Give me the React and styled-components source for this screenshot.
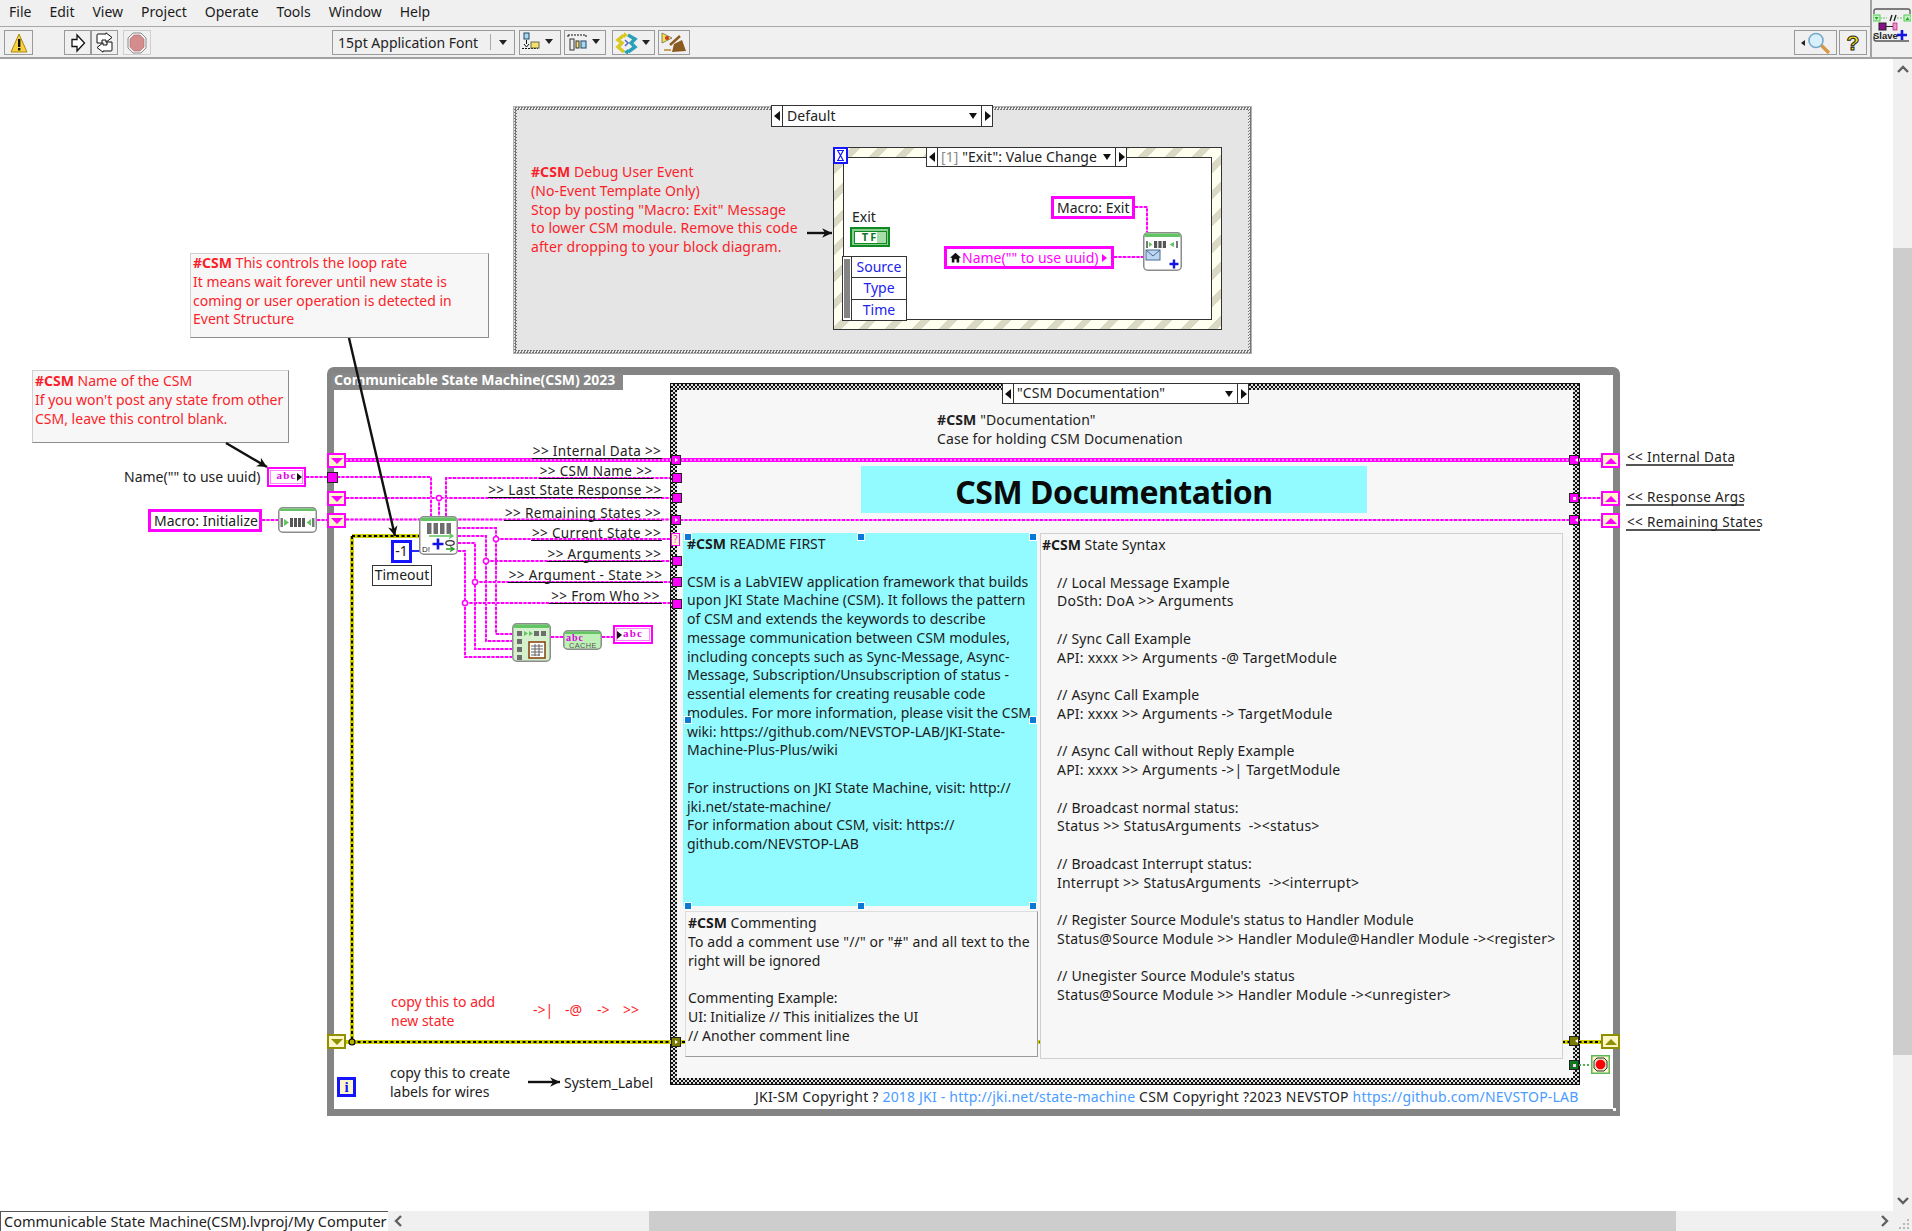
import React from "react";
import styled, { createGlobalStyle, css } from "styled-components";

const FONT = `"Noto Sans", "Open Sans", "Liberation Sans", sans-serif`;
const Y0 = 59;

const Global = createGlobalStyle`
  html, body { margin: 0; padding: 0; background: #fff; }
  #root { width: 1912px; height: 1231px; overflow: hidden; }
  * { box-sizing: border-box; }
`;

const place = css`
  position: absolute;
  left: ${(p) => p.$x}px;
  top: ${(p) => p.$y - Y0}px;
  ${(p) => (p.$w !== undefined ? `width: ${p.$w}px;` : "")}
  ${(p) => (p.$h !== undefined ? `height: ${p.$h}px;` : "")}
`;

const Page = styled.div`
  width: 1912px; height: 1231px; display: flex; flex-direction: column;
  font-family: ${FONT}; font-size: 14px; color: #222; background: #fff;
`;

/* ---------- header ---------- */
const Header = styled.header`
  display: flex; height: 59px; flex: none; background: #f0f0f0; border-bottom: 2px solid #a2a2a2;
`;
const HeaderMain = styled.div`flex: 1; display: flex; flex-direction: column;`;
const MenuBar = styled.nav`
  height: 27px; display: flex; align-items: center; padding: 0 0 3px 9px; gap: 18px;
  border-bottom: 1px solid #a8a8a8; font-size: 14px;
`;
const MenuItem = styled.span`color: #1c1c1c;`;
const Toolbar = styled.div`display: flex; align-items: center; height: 30px; padding: 1px 3px 0 4px;`;
const ToolBtn = styled.div`
  width: ${(p) => p.$w}px; height: 25px; margin-left: ${(p) => p.$ml || 0}px;
  display: flex; align-items: center; justify-content: center;
  border: 1.5px solid ${(p) => (p.$soft ? "#cfcfcf" : "#9a9a9a")}; background: #f0f0f0;
`;
const FontSelect = styled.div`
  width: 183px; height: 25px; margin-left: 181px; display: flex; align-items: center;
  border: 1.5px solid #9a9a9a; font-size: 14px; padding-left: 5px; padding-bottom: 1px; letter-spacing: 0;
`;
const FontName = styled.span`flex: 1; white-space: nowrap;`;
const FontCaret = styled.span`
  width: 24px; height: 16px; border-left: 1px solid #a8a8a8; display: flex; align-items: center; justify-content: center;
  &::after { content: ""; border: 4px solid transparent; border-top: 5px solid #222; margin-top: 5px; }
`;
const Spacer = styled.div`flex: 1;`;
const CornerIcon = styled.div`
  width: 42px; height: 57px; border-left: 2px solid #a2a2a2; padding: 8px 0 0 1px;
`;

/* ---------- middle ---------- */
const Middle = styled.main`flex: 1; display: flex; min-height: 0;`;
const Canvas = styled.div`flex: 1; position: relative; overflow: hidden; background: #fff;`;
const VScroll = styled.div`width: 19px; display: flex; flex-direction: column; background: #f0f0f0;`;
const ScrollBtn = styled.div`
  width: ${(p) => p.$w || 19}px; height: ${(p) => p.$h || 20}px; flex: none;
  display: flex; align-items: center; justify-content: center; color: #606060;
`;
const VGap = styled.div`height: ${(p) => p.$h}px; flex: none;`;
const VThumb = styled.div`height: 807px; flex: none; background: #cdcdcd;`;

/* ---------- bottom ---------- */
const Bottom = styled.footer`height: 20px; flex: none; display: flex; background: #f0f0f0;`;
const StatusPath = styled.div`
  width: 388px; height: 20px; background: #fff; border: 1px solid #555; border-bottom: 0; border-right: 0;
  font-size: 14.5px; line-height: 19px; padding-left: 3px; white-space: nowrap; overflow: hidden;
`;
const HGap = styled.div`width: ${(p) => p.$w}px; flex: none;`;
const HThumb = styled.div`width: 1027px; flex: none; background: #cdcdcd;`;
const HRest = styled.div`flex: 1;`;

/* ---------- structures on the diagram canvas ---------- */
const DisabledFrame = styled.div`
  ${place}; padding: 3px; border: 1px solid #b0b0b0;
  background: conic-gradient(#777 25%, #e8e8e8 0 50%, #777 0 75%, #e8e8e8 0) 0 0 / 3px 3px;
`;
const DisabledFill = styled.div`width: 100%; height: 100%; background: #e5e5e5;`;
const EventFrame = styled.div`
  ${place}; padding: 9px; border: 1.5px solid #333;
  background: repeating-linear-gradient(135deg, #fffff0 0 12px, #d9d9c4 12px 19px);
`;
const EventFill = styled.div`width: 100%; height: 100%; background: #fff; border: 1.5px solid #333;`;
const Selector = styled.div`
  ${place}; display: flex; align-items: stretch; background: #fff; border: 1.5px solid #333;
  font-size: 14px; color: #222; z-index: 3;
`;
const SelArrow = styled.div`
  width: 11px; flex: none; display: flex; align-items: center; justify-content: center;
  border-${(p) => (p.$dir === "l" ? "right" : "left")}: 1.5px solid #333;
  &::after {
    content: ""; border: 5px solid transparent;
    ${(p) => (p.$dir === "l" ? "border-right: 6px solid #111; margin-left: -6px;" : "border-left: 6px solid #111; margin-right: -6px;")}
  }
`;
const SelText = styled.div`
  flex: 1; display: flex; align-items: center; padding: 0 0 2px ${(p) => p.$pad || 4}px; white-space: nowrap; position: relative;
  letter-spacing: 0.08px;
`;
const SelCaret = styled.span`
  position: absolute; right: 4px; top: 50%; margin-top: -3px; border: 4px solid transparent; border-top: 6px solid #111;
`;
const GreyIdx = styled.span`color: #8a8a8a;`;

const LoopFrame = styled.div`
  ${place}; border: 7px solid #848484; border-top-width: 8px; border-bottom-width: 7px;
  border-radius: 7px 7px 0 0; background: #fff;
`;
const LoopTitle = styled.div`
  ${place}; background: #888; color: #fff; font-weight: 700; font-size: 14px; line-height: 13px;
  padding-left: 3px; white-space: nowrap; letter-spacing: -0.05px; z-index: 1;
`;
const LoopNotch = styled.div`${place}; background: #fff;`;
const CaseFrame = styled.div`
  ${place}; padding: 6px; border: 1px solid #111;
  background: conic-gradient(#111 25%, #ddd 0 50%, #111 0 75%, #ddd 0) 0 0 / 4px 4px;
`;
const CaseFill = styled.div`width: 100%; height: 100%; background: #f7f7f7;`;

/* ---------- wires ---------- */
const WireSvg = styled.svg`position: absolute; left: 0; top: 0; width: 1893px; height: 1152px; pointer-events: none;`;
const WIRE_THIN = [
  "262,520 278,520", "317,520 327,520", "306,477 327,477", "337,477 431,477 431,516",
  "346,498 670,498", "439,498 439,516", "446,516 446,478 670,478", "346,519.5 670,519.5",
  "458,528 496,528 496,634 512,634", "458,536 486,536 486,641 512,641",
  "458,543 475,543 475,649 512,649", "458,551 465,551 465,657 512,657",
  "496,539 670,539", "486,561 670,561", "475,582 670,582", "465,603 670,603",
  "680,520 1569,520", "1579,498 1601,498", "1579,520 1601,520",
  "551,637 563,637", "602,637 613,637",
  "1135,207 1147,207 1147,232", "1114,257 1143,257",
];
const JUNCTIONS = [[439, 498], [496, 539], [486, 561], [475, 582], [465, 603]];
const ARROWS = [
  [349, 338, 395, 536], [226, 443, 267, 467], [807, 233, 832, 233], [528, 1082, 560, 1082],
];

function Wires() {
  return (
    <WireSvg viewBox={`0 ${Y0} 1893 1152`}>
      <g fill="none">
        {WIRE_THIN.map((p) => (
          <g key={p}>
            <polyline points={p} stroke="#ffa8ff" strokeWidth="2" />
            <polyline points={p} stroke="#ff00ff" strokeWidth="2" strokeDasharray="3 1.5" />
          </g>
        ))}
        <polyline points="346,460 1601,460" stroke="#ff00ff" strokeWidth="4" />
        <polyline points="346,460 1601,460" stroke="#fff" strokeWidth="1" strokeDasharray="2 2" />
        <polyline points="352,536 352,1042 1601,1042" stroke="#d0d000" strokeWidth="4" />
        <polyline points="352,536 420,536" stroke="#d0d000" strokeWidth="4" />
        <polyline points="346,1042 1601,1042" stroke="#d0d000" strokeWidth="4" />
        <polyline points="352,536 352,1042 1601,1042" stroke="#000" strokeWidth="2" strokeDasharray="3 2.5" />
        <polyline points="352,536 420,536" stroke="#000" strokeWidth="2" strokeDasharray="3 2.5" />
        <polyline points="412,551 420,551" stroke="#2a2aff" strokeWidth="2" />
        <polyline points="1579,1065 1592,1065" stroke="#4fb04f" strokeWidth="2" strokeDasharray="2 2" />
      </g>
      {JUNCTIONS.map(([x, y]) => (
        <circle key={x} cx={x} cy={y} r="2.6" fill="#fff" stroke="#ff00ff" strokeWidth="1.5" />
      ))}
      <circle cx="352" cy="1042" r="3" fill="#b3b300" stroke="#000" strokeWidth="1.2" />
    </WireSvg>
  );
}
const ArrowSvg = styled(WireSvg)`z-index: 6;`;
function Arrows() {
  return (
    <ArrowSvg viewBox={`0 ${Y0} 1893 1152`}>
      {ARROWS.map(([a, b, c, d]) => {
        const ang = Math.atan2(d - b, c - a);
        const pt = (r, t) => `${c + r * Math.cos(ang + t)},${d + r * Math.sin(ang + t)}`;
        return (
          <g key={a}>
            <line x1={a} y1={b} x2={c} y2={d} stroke="#111" strokeWidth="2.4" />
            <polygon points={`${c},${d} ${pt(11, Math.PI - 0.45)} ${pt(7, Math.PI)} ${pt(11, Math.PI + 0.45)}`} fill="#111" />
          </g>
        );
      })}
    </ArrowSvg>
  );
}

/* ---------- text on the diagram ---------- */
const Note = styled.div`
  ${place}; background: #f7f7f7; border: 1px solid #d0d0d0; border-right: 1.5px solid #8c8c8c; border-bottom: 1.5px solid #8c8c8c;
  padding: ${(p) => p.$pt || 0}px 2px 0; z-index: 2;
`;
const RedLines = styled.div`color: #fa1e2a; font-size: 14px; line-height: 18.75px; white-space: pre;`;
const Tag = styled.b`font-weight: 700;`;
const FreeText = styled.div`
  ${place}; white-space: pre; font-size: ${(p) => p.$size || 14}px; line-height: ${(p) => p.$lh || 19}px;
  color: ${(p) => p.$color || "#222"}; z-index: 2;
  letter-spacing: ${(p) => p.$ls || 0}px;
`;
const WireLabel = styled.div`
  ${place}; text-align: center; font-size: 13.5px; line-height: 12px; height: 13.5px; color: #222; white-space: pre;
  border-bottom: 1.5px solid #111; letter-spacing: 0.35px; z-index: 2;
`;
const SideLabel = styled.div`
  ${place}; font-size: 13.5px; line-height: 14px; height: 16px; color: #222; white-space: pre;
  border-bottom: 2px solid #555; letter-spacing: 0.35px; z-index: 2; padding-left: 1px;
`;
const Heading = styled.div`
  ${place}; background: #92fbff; display: flex; align-items: center; justify-content: center; padding-top: 3px;
  font-weight: 700; font-size: 32px; color: #0a0a0a; letter-spacing: -0.5px; z-index: 2;
`;
const DocPanel = styled.div`
  ${place}; background: ${(p) => p.$bg || "#f7f7f7"}; padding: 2px 0 0 ${(p) => p.$pl || 3}px; z-index: 2;
  ${(p) => p.$border && `border: 1px solid #d0d0d0;`}
  ${(p) => p.$shadow && `border-right: 1.5px solid #999; border-bottom: 1.5px solid #999; border-top: 1px solid #ddd; border-left: 1px solid #ddd;`}
`;
const TextLine = styled.div`
  height: 18.75px; line-height: 18.75px; font-size: 14px; white-space: pre; color: #1c1c1c;
  padding-left: ${(p) => p.$indent || 0}px;
  letter-spacing: ${(p) => p.$ls ?? 0}px;
`;
const Handle = styled.div`${place}; background: #0a78d7; border: 1px solid #fff; z-index: 4;`;
const Copyright = styled.div`
  ${place}; font-size: 14px; line-height: 19px; white-space: pre; color: #222; z-index: 2; letter-spacing: 0.2px;
`;
const CopyLink = styled.span`color: #4a9cff;`;

/* ---------- nodes ---------- */
const StringConst = styled.div`
  ${place}; background: #fff; border: 3px solid #ff00ff; font-size: 14px; line-height: 17px; display: flex; align-items: center;
  padding-left: ${(p) => p.$pad || 3}px; white-space: nowrap; color: ${(p) => p.$color || "#222"}; z-index: 3;
`;
const RightTri = styled.span`
  border: 4px solid transparent; border-left: 5px solid #ff00ff; margin-left: 3px; margin-right: -3px;
`;
const ShiftRegBox = styled.div`
  ${place}; width: 19px; height: 15px; background: #fdf6c8; border: 2.5px solid ${(p) => p.$c};
  display: flex; align-items: center; justify-content: center; z-index: 3;
  &::after {
    content: ""; border: 6px solid transparent;
    ${(p) => (p.$up ? `border-bottom: 6px solid ${p.$c}; border-top: 0;` : `border-top: 6px solid ${p.$c}; border-bottom: 0;`)}
    border-left-width: 6.5px; border-right-width: 6.5px;
  }
`;
const TunnelBox = styled.div`
  ${place}; width: ${(p) => p.$s || 10}px; height: ${(p) => p.$s || 10}px; background: ${(p) => p.$c || "#ff00ff"};
  border: 1px solid #222; z-index: 3; display: flex; align-items: center; justify-content: center;
  ${(p) => p.$mark === "l" && `&::after { content: ""; border: 2.5px solid transparent; border-left: 3px solid #fff; margin-right: -3px; }`}
  ${(p) => p.$mark === "r" && `&::after { content: ""; border: 2.5px solid transparent; border-right: 3px solid #fff; margin-left: 3px; }`}
  ${(p) => p.$mark === "c" && `&::after { content: ""; width: 3px; height: 3px; background: #ffd0ff; }`}
`;
const QueryTunnel = styled.div`
  ${place}; background: #fdf6c8; border: 1px solid #ff00ff; color: #ff30ff; font-size: 10px; line-height: 11px; text-align: center; z-index: 3;
`;
const AbcTerm = styled.div`
  ${place}; border: 2.5px solid #ff00ff; background: #fff; padding: 1px; z-index: 3; position: absolute;
  &::after {
    content: ""; position: absolute; top: 50%; margin-top: -4px; border: 4px solid transparent;
    ${(p) => (p.$left ? "left: 2px; border-left: 5px solid #111;" : "right: -2px; border-left: 5px solid #111;")}
  }
`;
const AbcInner = styled.div`
  width: 100%; height: 100%; border: 1.5px solid #ff80ff; background: #fff; color: #e000e0; font-family: "Liberation Serif", serif;
  font-weight: 700; font-size: 11px; line-height: 9px; letter-spacing: 1.2px; text-align: center;
`;
const NumConst = styled.div`
  ${place}; border: 3px solid #1414ff; background: #fff; text-align: center; font-size: 14px; line-height: 16px; color: #222; z-index: 3;
`;
const LabelBox = styled.div`
  ${place}; border: 1.5px solid #333; background: #fff; text-align: center; font-size: 14px; line-height: 17px; color: #222; z-index: 3;
`;
const IterBox = styled.div`
  ${place}; border: 3px solid #1414ff; background: #fdf6c8; color: #1414ff; font-family: "Liberation Serif", serif; font-weight: 700;
  font-size: 15px; line-height: 14px; text-align: center; z-index: 3;
`;
const TFBox = styled.div`
  ${place}; border: 2.5px solid #0e8a20; background: #8ccf92; padding: 1.5px; z-index: 3;
`;
const TFInner = styled.div`
  width: 100%; height: 100%; border: 1px solid #0e8a20; background: linear-gradient(90deg, #fff 72%, #a8dca8 72%);
  color: #0e7a1c; font-weight: 700; font-size: 11px; line-height: 10px; text-align: center; letter-spacing: 2px;
`;
const EventData = styled.div`
  ${place}; display: flex; background: #fff; border: 1.5px solid #333; z-index: 3;
`;
const EventBar = styled.div`width: 9px; background: #fff; border-right: 1.5px solid #333; padding: 2px 1px;
  &::after { content: ""; display: block; height: 100%; background: #848484; }
`;
const EventRows = styled.div`flex: 1; display: flex; flex-direction: column;`;
const EventRow = styled.div`
  flex: 1; color: #2222ee; font-size: 14px; text-align: center; line-height: 19px;
  & + & { border-top: 1.5px solid #333; }
`;
const NodeWrap = styled.div`${place}; z-index: 4; display: flex;`;
const InlineIcon = styled.svg`flex: none; margin: 0 1px 0 1px;`;

/* ---------- icons ---------- */
const G = "#62c462";
const Shell = ({ w = 39, h = 39, band = 4, fill = "#fff", children }) => (
  <svg width={w} height={h} viewBox={`0 0 ${w} ${h}`}>
    <rect x=".75" y=".75" width={w - 1.5} height={h - 1.5} rx="4" fill={fill} stroke="#8c8c8c" strokeWidth="1.5" />
    <path d={`M1.5 ${band + 1} V4 Q1.5 1.5 4 1.5 H${w - 4} Q${w - 1.5} 1.5 ${w - 1.5} 4 V${band + 1} Z`} fill={G} />
    {children}
  </svg>
);
const Bars = ({ x, y, n = 3, w = 4, h = 10, gap = 1.8, c = "#6e6e6e" }) => (
  <g fill={c}>{Array.from({ length: n }, (_, i) => <rect key={i} x={x + i * (w + gap)} y={y} width={w} height={h} />)}</g>
);
const BlueP = ({ x, y, s = 5, t = 2.2 }) => (
  <path d={`M${x - s} ${y} H${x + s} M${x} ${y - s} V${y + s}`} stroke="#1414e0" strokeWidth={t} />
);
const InitIcon = () => (
  <Shell h={26} band={3}>
    <rect x="2.5" y="11" width="2.5" height="9" fill="#777" />
    <polygon points="6,12 6,19 11,15.5" fill={G} />
    <Bars x={12} y={11} n={4} w={3} h={9} gap={1} c="#555" />
    <polygon points="33,12 33,19 28.5,15.5" fill={G} />
    <rect x="34" y="11" width="2.5" height="9" fill="#777" />
  </Shell>
);
const StateIcon = () => (
  <Shell>
    <Bars x={8} y={7} n={4} w={4.5} h={11} gap={2} />
    <path d="M10 20 H33 M30 17.5 L34 20 L30 22.5" stroke={G} strokeWidth="1.3" fill="none" />
    <BlueP x={19} y={28} s={5.5} t={2.6} />
    <text x="3" y="36" fontSize="8" fontFamily="Liberation Sans" fill="#222">D!</text>
    <ellipse cx="31" cy="27" rx="4.2" ry="2.4" fill="none" stroke="#333" strokeWidth="1.3" />
    <path d="M27 33 H34 M31 30.5 L35 33 L31 35.5" stroke="#2a9a2a" strokeWidth="1.4" fill="none" />
  </Shell>
);
const PostIcon = () => (
  <Shell>
    <rect x="3" y="9" width="2" height="7" fill="#777" />
    <polygon points="6,10 6,15 9.5,12.5" fill={G} />
    <Bars x={11} y={9} n={3} w={3.2} h={7} gap={1.2} c="#555" />
    <polygon points="31,10 31,15 26.5,12.5" fill={G} />
    <rect x="33" y="9" width="2" height="7" fill="#777" />
    <rect x="3" y="18" width="14" height="10" fill="#bcd6f4" stroke="#4a6a8a" />
    <path d="M3 18 L10 24 L17 18" fill="none" stroke="#4a6a8a" />
    <BlueP x={31} y={32} s={4.5} t={2.4} />
  </Shell>
);
const LogIcon = () => (
  <Shell fill="#d4f0cc">
    <g fill="#6e6e6e">
      <rect x="5" y="8" width="5" height="5" /><rect x="22" y="8" width="5" height="5" /><rect x="29" y="8" width="5" height="5" />
      <rect x="5" y="16" width="5" height="5" /><rect x="5" y="24" width="5" height="5" /><rect x="5" y="32" width="5" height="5" />
    </g>
    <polygon points="12,8 12,13 16,10.5" fill={G} /><polygon points="17,8 17,13 21,10.5" fill={G} />
    <rect x="17" y="19" width="16" height="16" fill="#fff" stroke="#8a4a14" strokeWidth="1.6" />
    <path d="M19 23 H31 M19 26 H31 M19 29 H31 M19 32 H28 M23 21 V33 M27 21 V33" stroke="#555" strokeWidth=".9" />
  </Shell>
);
const CacheIcon = () => (
  <Shell h={20} band={3} fill="#bff0b8">
    <text x="3" y="11" fontSize="10" fontWeight="700" fontFamily="Liberation Serif" fill="#e000e0" letterSpacing="1">abc</text>
    <text x="6" y="18" fontSize="7.4" fontFamily="Liberation Sans" fill="#555" letterSpacing=".4">CACHE</text>
  </Shell>
);
const StopIcon = () => (
  <svg width="19" height="19" viewBox="0 0 19 19">
    <rect x=".75" y=".75" width="17.5" height="17.5" fill="#fdf6c8" stroke="#5cb85c" strokeWidth="1.5" />
    <polygon points="6,3 13,3 16,6 16,13 13,16 6,16 3,13 3,6" fill="#e8e0c8" stroke="#333" />
    <circle cx="9.5" cy="9.5" r="4.8" fill="#ff0000" />
  </svg>
);
const HourGlass = () => (
  <svg width="15" height="17" viewBox="0 0 15 17">
    <rect x="1" y="1" width="13" height="15" fill="#fff" stroke="#1414ff" strokeWidth="2" />
    <path d="M4 3.5 H11 M4 13.5 H11 M5 4 L10 13 M10 4 L5 13" stroke="#1414ff" strokeWidth="1.2" fill="none" />
  </svg>
);
const House = () => (
  <InlineIcon width="11" height="11" viewBox="0 0 11 11">
    <path d="M5.5 0.8 L11 5.8 H9.2 V10.4 H6.6 V7.2 H4.4 V10.4 H1.8 V5.8 H0 Z" fill="#111" />
  </InlineIcon>
);
const WarnIcon = () => (
  <svg width="18" height="20" viewBox="0 0 18 20">
    <polygon points="9,1 17,19 1,19" fill="#f8d040" stroke="#a88a10" />
    <rect x="8" y="6" width="2.4" height="8" fill="#111" /><rect x="8" y="15" width="2.4" height="2.4" fill="#111" />
  </svg>
);
const RunIcon = () => (
  <svg width="16" height="20" viewBox="0 0 16 20">
    <polygon points="2,6.5 7,6.5 7,2 14.5,10 7,18 7,13.5 2,13.5" fill="#fff" stroke="#111" strokeWidth="1.3" />
  </svg>
);
const RunContIcon = () => (
  <svg width="21" height="21" viewBox="0 0 21 21">
    <path d="M4 2 H12 V0.8 L18 5.5 L12 10.2 V8 H8 V11 H3 V3 Q3 2 4 2Z" fill="#fff" stroke="#111" />
    <path d="M17 19 H9 V20.2 L3 15.5 L9 10.8 V13 H13 V10 H18 V18 Q18 19 17 19Z" fill="#fff" stroke="#111" />
  </svg>
);
const AbortIcon = () => (
  <svg width="20" height="22" viewBox="0 0 20 22">
    <polygon points="6,1 14,1 19,6 19,16 14,21 6,21 1,16 1,6" fill="#f4f4f4" stroke="#8a8a8a" />
    <polygon points="7,3 13,3 17,7 17,15 13,19 7,19 3,15 3,7" fill="#d48c8c" stroke="#a86868" strokeWidth=".6" />
  </svg>
);
const Caret = () => <svg width="8" height="6" viewBox="0 0 8 6"><polygon points="0,0 8,0 4,5" fill="#222" /></svg>;
const AlignIcon = () => (
  <svg width="38" height="21" viewBox="0 0 38 21">
    <rect x="3" y="1" width="5" height="6" fill="#a8d8f0" stroke="#246" />
    <path d="M5.5 8 V12 M3 12 L5.5 15 L8 12" stroke="#111" fill="none" />
    <path d="M1 16.5 H17" stroke="#111" strokeDasharray="2 1" />
    <rect x="10" y="10" width="8" height="6" fill="#f4e070" stroke="#664" />
    <g transform="translate(24 7)"><Caret /></g>
  </svg>
);
const DistIcon = () => (
  <svg width="38" height="21" viewBox="0 0 38 21">
    <path d="M2 3 H20 M2 3 V5 M20 3 V5" stroke="#111" strokeDasharray="2 1" />
    <rect x="4" y="7" width="4" height="11" fill="#eee" stroke="#333" />
    <rect x="10" y="9" width="3" height="7" fill="#f4e070" stroke="#333" />
    <rect x="15" y="9" width="5" height="7" fill="#a8d8f0" stroke="#246" />
    <g transform="translate(26 7)"><Caret /></g>
  </svg>
);
const ReorderIcon = () => (
  <svg width="38" height="22" viewBox="0 0 38 22">
    <path d="M9 3 L3 8 L7 11 L3 15 L9 20" fill="none" stroke="#d8c820" strokeWidth="3.4" />
    <polygon points="9,0 9,6 13,3" fill="#d8c820" />
    <path d="M13 20 L20 15 L16 11 L20 7 L13 3" fill="none" stroke="#2aa0b8" strokeWidth="3.4" />
    <polygon points="13,17 13,23 9,20" fill="#2aa0b8" />
    <path d="M10 8 L13 11 L10 14" fill="none" stroke="#5a6ac8" strokeWidth="1.6" />
    <g transform="translate(27 8)"><Caret /></g>
  </svg>
);
const CleanIcon = () => (
  <svg width="28" height="23" viewBox="0 0 28 23">
    <polygon points="2,2 12,7 2,12" fill="#f4e040" stroke="#886" />
    <circle cx="7" cy="7" r="2" fill="#d03030" />
    <path d="M10 14 L20 5" stroke="#8a5a20" strokeWidth="2.4" />
    <polygon points="14,13 22,9 26,20 12,21" fill="#8a5a20" />
    <path d="M4 19 H11" stroke="#c8a060" strokeWidth="2" />
  </svg>
);
const SearchIcon = () => (
  <svg width="38" height="22" viewBox="0 0 38 22">
    <polygon points="4,11 8,8 8,14" fill="#222" />
    <path d="M24 13 L32 21" stroke="#d89848" strokeWidth="3.4" />
    <circle cx="19" cy="8.5" r="7" fill="#d8f0fc" stroke="#7aa8c8" strokeWidth="1.6" />
  </svg>
);
const HelpIcon = () => (
  <svg width="20" height="22" viewBox="0 0 20 22">
    <text x="10" y="18" textAnchor="middle" fontSize="21" fontWeight="700" fontFamily="Liberation Sans" fill="#f4e020" stroke="#222" strokeWidth="1">?</text>
  </svg>
);
const ChevUp = () => <svg width="12" height="8" viewBox="0 0 12 8"><path d="M1 7 L6 2 L11 7" stroke="#606060" strokeWidth="2.4" fill="none" /></svg>;
const ChevDown = () => <svg width="12" height="8" viewBox="0 0 12 8"><path d="M1 1 L6 6 L11 1" stroke="#606060" strokeWidth="2.4" fill="none" /></svg>;
const ChevLeft = () => <svg width="8" height="12" viewBox="0 0 8 12"><path d="M7 1 L2 6 L7 11" stroke="#606060" strokeWidth="2.4" fill="none" /></svg>;
const ChevRight = () => <svg width="8" height="12" viewBox="0 0 8 12"><path d="M1 1 L6 6 L1 11" stroke="#606060" strokeWidth="2.4" fill="none" /></svg>;
const Grip = () => (
  <svg width="19" height="20" viewBox="0 0 19 20">
    {[[14, 8], [10, 12], [14, 12], [6, 16], [10, 16], [14, 16]].map(([x, y]) => (
      <rect key={`${x}${y}`} x={x} y={y} width="2" height="2" fill="#b8b8b8" />
    ))}
  </svg>
);
const SlaveIcon = () => (
  <svg width="38" height="35" viewBox="0 0 38 35">
    <path d="M1 6 V3 Q1 1 3 1 H35 Q37 1 37 3 V6 M1 28 V31 Q1 33 3 33 H36" stroke="#555" strokeWidth="1.3" fill="none" />
    <rect x="0" y="7" width="7" height="6" fill="#c8f0c8" stroke="#5c5" /><polygon points="1.5,9 5.5,9 3.5,12" fill="#2a2" />
    <rect x="31" y="7" width="7" height="6" fill="#c8f0c8" stroke="#5c5" /><polygon points="32.5,12 36.5,12 34.5,9" fill="#2a2" />
    <path d="M7 10 H14 M24 10 H31" stroke="#8fd08f" strokeWidth="1.4" strokeDasharray="2 1" />
    <path d="M17 13 L19 7 M21 13 L23 7" stroke="#222" strokeWidth="1.4" />
    <rect x="6" y="15" width="7" height="7" fill="#8a0f8a" stroke="#222" />
    <path d="M13 18.5 H20" stroke="#222" /><rect x="20" y="15" width="4" height="7" fill="#f090d0" stroke="#a06" strokeWidth=".6" />
    <text x="0" y="31" fontSize="9.5" fontWeight="700" fontFamily="Liberation Sans" fill="#222">Slave</text>
    <BlueP x={29} y={27} s={5} t={2.6} />
  </svg>
);

/* ---------- data ---------- */
const MENU = ["File", "Edit", "View", "Project", "Operate", "Tools", "Window", "Help"];
const README = [
  [<Tag key="a">#CSM</Tag>, " README FIRST"], [""],
  ["CSM is a LabVIEW application framework that builds"],
  ["upon JKI State Machine (CSM). It follows the pattern"],
  ["of CSM and extends the keywords to describe"],
  ["message communication between CSM modules,"],
  ["including concepts such as Sync-Message, Async-"],
  ["Message, Subscription/Unsubscription of status -"],
  ["essential elements for creating reusable code"],
  ["modules. For more information, please visit the CSM"],
  ["wiki: https://github.com/NEVSTOP-LAB/JKI-State-"],
  ["Machine-Plus-Plus/wiki"], [""],
  ["For instructions on JKI State Machine, visit: http://"],
  ["jki.net/state-machine/"],
  ["For information about CSM, visit: https://"],
  ["github.com/NEVSTOP-LAB"],
];
const COMMENT = [
  [<Tag key="a">#CSM</Tag>, " Commenting"],
  ['To add a comment use "//" or "#" and all text to the'],
  ["right will be ignored"], [""],
  ["Commenting Example:"],
  ["UI: Initialize // This initializes the UI"],
  ["// Another comment line"],
];
const SYNTAX = [
  "", "// Local Message Example", "DoSth: DoA >> Arguments", "",
  "// Sync Call Example", "API: xxxx >> Arguments -@ TargetModule", "",
  "// Async Call Example", "API: xxxx >> Arguments -> TargetModule", "",
  "// Async Call without Reply Example", "API: xxxx >> Arguments ->| TargetModule", "",
  "// Broadcast normal status:", "Status >> StatusArguments  -><status>", "",
  "// Broadcast Interrupt status:", "Interrupt >> StatusArguments  -><interrupt>", "",
  "// Register Source Module's status to Handler Module",
  "Status@Source Module >> Handler Module@Handler Module -><register>", "",
  "// Unegister Source Module's status",
  "Status@Source Module >> Handler Module -><unregister>",
];
const WIRE_LABELS = [
  [">> Internal Data >>", 532, 445, 130], [">> CSM Name >>", 539, 465, 114],
  [">> Last State Response >>", 488, 484, 174], [">> Remaining States >>", 504, 507, 158],
  [">> Current State >>", 531, 527, 131], [">> Arguments >>", 547, 548, 115],
  [">> Argument - State >>", 508, 569, 155], [">> From Who >>", 549, 590, 113],
];
const SIDE_LABELS = [
  ["<< Internal Data", 1626, 450, 107], ["<< Response Args", 1626, 490, 118], ["<< Remaining States", 1626, 515, 134],
];
const MAG_TUNNELS = [[672, 473], [672, 493], [672, 556], [672, 577], [672, 599]];
const HANDLES = [[684, 533], [857, 533], [1029, 533], [684, 716], [1029, 716], [684, 902], [857, 902], [1029, 902]];

export default function App() {
  return (
    <Page>
      <Global />
      <Header>
        <HeaderMain>
          <MenuBar>{MENU.map((m) => <MenuItem key={m}>{m}</MenuItem>)}</MenuBar>
          <Toolbar>
            <ToolBtn $w={29}><WarnIcon /></ToolBtn>
            <ToolBtn $w={27} $ml={31}><RunIcon /></ToolBtn>
            <ToolBtn $w={27}><RunContIcon /></ToolBtn>
            <ToolBtn $w={28} $ml={5} $soft><AbortIcon /></ToolBtn>
            <FontSelect><FontName>15pt Application Font</FontName><FontCaret /></FontSelect>
            <ToolBtn $w={42} $ml={4}><AlignIcon /></ToolBtn>
            <ToolBtn $w={42} $ml={3}><DistIcon /></ToolBtn>
            <ToolBtn $w={43} $ml={6}><ReorderIcon /></ToolBtn>
            <ToolBtn $w={32} $ml={3}><CleanIcon /></ToolBtn>
            <Spacer />
            <ToolBtn $w={43}><SearchIcon /></ToolBtn>
            <ToolBtn $w={28} $ml={2}><HelpIcon /></ToolBtn>
          </Toolbar>
        </HeaderMain>
        <CornerIcon><SlaveIcon /></CornerIcon>
      </Header>

      <Middle>
        <Canvas>
          {/* upper disabled structure */}
          <DisabledFrame $x={513} $y={106} $w={739} $h={248}><DisabledFill /></DisabledFrame>
          <Selector $x={771} $y={105} $w={222} $h={22}>
            <SelArrow $dir="l" /><SelText>Default<SelCaret /></SelText><SelArrow $dir="r" />
          </Selector>
          <FreeText $x={531} $y={163} $color="#fa1e2a" $lh={18.75} $ls={0.08}>
            <Tag>#CSM</Tag>{` Debug User Event
(No-Event Template Only)
Stop by posting "Macro: Exit" Message
to lower CSM module. Remove this code
after dropping to your block diagram.`}
          </FreeText>
          <EventFrame $x={833} $y={147} $w={389} $h={183}><EventFill /></EventFrame>
          <NodeWrap $x={833} $y={147}><HourGlass /></NodeWrap>
          <Selector $x={926} $y={147} $w={201} $h={20}>
            <SelArrow $dir="l" /><SelText $pad={3}><GreyIdx>[1]&nbsp;</GreyIdx>"Exit": Value Change<SelCaret /></SelText><SelArrow $dir="r" />
          </Selector>
          <FreeText $x={852} $y={207}>Exit</FreeText>
          <TFBox $x={850} $y={227} $w={40} $h={20}><TFInner>TF</TFInner></TFBox>
          <EventData $x={842} $y={256} $w={65} $h={65}>
            <EventBar />
            <EventRows>
              <EventRow>Source</EventRow><EventRow>Type</EventRow><EventRow>Time</EventRow>
            </EventRows>
          </EventData>

          {/* main loop */}
          <LoopFrame $x={327} $y={367} $w={1293} $h={749} />
          <LoopTitle $x={331} $y={373} $w={292} $h={17}>Communicable State Machine(CSM) 2023</LoopTitle>
          <CaseFrame $x={670} $y={383} $w={910} $h={702}><CaseFill /></CaseFrame>
          <Selector $x={1002} $y={383} $w={247} $h={21}>
            <SelArrow $dir="l" /><SelText $pad={3}>"CSM Documentation"<SelCaret /></SelText><SelArrow $dir="r" />
          </Selector>
          <FreeText $x={937} $y={410} $ls={0.12}><Tag>#CSM</Tag>{` "Documentation"
Case for holding CSM Documenation`}</FreeText>
          <Heading $x={861} $y={466} $w={506} $h={47}>CSM Documentation</Heading>

          <Wires />

          <DocPanel $x={683} $y={533} $w={354} $h={373} $bg="#92fbff" $pl={4}>
            {README.map((l, i) => <TextLine key={i}>{l}</TextLine>)}
          </DocPanel>
          {HANDLES.map(([x, y]) => <Handle key={`${x}-${y}`} $x={x} $y={y} $w={8} $h={8} />)}
          <DocPanel $x={1040} $y={533} $w={523} $h={526} $border $pl={1}>
            <TextLine><Tag>#CSM</Tag> State Syntax</TextLine>
            {SYNTAX.map((l, i) => <TextLine key={i} $indent={15} $ls={l.includes(">") ? 0.22 : 0.12}>{l}</TextLine>)}
          </DocPanel>
          <DocPanel $x={685} $y={911} $w={353} $h={146} $shadow $pl={2}>
            {COMMENT.map((l, i) => <TextLine key={i} $ls={String(l[0]).includes('"') ? 0.13 : 0}>{l}</TextLine>)}
          </DocPanel>

          {/* notes */}
          <Note $x={190} $y={253} $w={299} $h={85}>
            <RedLines><Tag>#CSM</Tag>{` This controls the loop rate
It means wait forever until new state is
coming or user operation is detected in
Event Structure`}</RedLines>
          </Note>
          <Note $x={32} $y={370} $w={257} $h={73} $pt={1}>
            <RedLines><Tag>#CSM</Tag>{` Name of the CSM
If you won't post any state from other
CSM, leave this control blank.`}</RedLines>
          </Note>

          {/* terminals of the main loop */}
          <FreeText $x={124} $y={467}>Name("" to use uuid)</FreeText>
          <AbcTerm $x={267} $y={467} $w={39} $h={20}><AbcInner>abc</AbcInner></AbcTerm>
          <StringConst $x={148} $y={509} $w={114} $h={23}>Macro: Initialize</StringConst>
          <NodeWrap $x={278} $y={507}><InitIcon /></NodeWrap>
          <TunnelBox $x={327} $y={472} $s={11} />
          <ShiftRegBox $x={327} $y={453} $c="#ff00ff" />
          <ShiftRegBox $x={327} $y={491} $c="#ff00ff" />
          <ShiftRegBox $x={327} $y={513} $c="#ff00ff" />
          <ShiftRegBox $x={327} $y={1034} $c="#8f8f00" />
          <ShiftRegBox $x={1601} $y={453} $c="#ff00ff" $up />
          <ShiftRegBox $x={1601} $y={491} $c="#ff00ff" $up />
          <ShiftRegBox $x={1601} $y={513} $c="#ff00ff" $up />
          <ShiftRegBox $x={1601} $y={1034} $c="#8f8f00" $up />
          <NumConst $x={391} $y={540} $w={21} $h={23}>-1</NumConst>
          <LabelBox $x={372} $y={565} $w={60} $h={21}>Timeout</LabelBox>
          <NodeWrap $x={419} $y={516}><StateIcon /></NodeWrap>
          <NodeWrap $x={512} $y={623}><LogIcon /></NodeWrap>
          <NodeWrap $x={563} $y={630}><CacheIcon /></NodeWrap>
          <AbcTerm $x={613} $y={625} $w={40} $h={19} $left><AbcInner>abc</AbcInner></AbcTerm>

          {WIRE_LABELS.map(([t, x, y, w]) => <WireLabel key={t} $x={x} $y={y} $w={w}>{t}</WireLabel>)}
          {SIDE_LABELS.map(([t, x, y, w]) => <SideLabel key={t} $x={x} $y={y} $w={w}>{t}</SideLabel>)}

          {/* case tunnels */}
          <TunnelBox $x={671} $y={455} $mark="l" />
          <TunnelBox $x={671} $y={515} $mark="l" />
          {MAG_TUNNELS.map(([x, y]) => <TunnelBox key={y} $x={x} $y={y} />)}
          <QueryTunnel $x={671} $y={533} $w={9} $h={13}>?</QueryTunnel>
          <TunnelBox $x={671} $y={1037} $c="#7a7a00" $mark="l" />
          <TunnelBox $x={1569} $y={455} $mark="r" />
          <TunnelBox $x={1569} $y={493} $mark="c" />
          <TunnelBox $x={1569} $y={515} $mark="r" />
          <TunnelBox $x={1569} $y={1036} $c="#7a7a00" $mark="r" />
          <TunnelBox $x={1569} $y={1060} $c="#0e7a1c" $mark="c" />
          <NodeWrap $x={1591} $y={1055}><StopIcon /></NodeWrap>

          {/* upper structure nodes */}
          <StringConst $x={1051} $y={196} $w={84} $h={23} $pad={3}>Macro: Exit</StringConst>
          <StringConst $x={944} $y={246} $w={170} $h={23} $pad={2} $color="#ff00ff">
            <House />Name("" to use uuid)<RightTri />
          </StringConst>
          <NodeWrap $x={1143} $y={232}><PostIcon /></NodeWrap>

          {/* free text at the bottom of the loop */}
          <FreeText $x={391} $y={992} $color="#fa1e2a">{`copy this to add
new state`}</FreeText>
          <FreeText $x={533} $y={1000} $color="#fa1e2a">-&gt;|</FreeText>
          <FreeText $x={565} $y={1000} $color="#fa1e2a">-@</FreeText>
          <FreeText $x={597} $y={1000} $color="#fa1e2a">-&gt;</FreeText>
          <FreeText $x={623} $y={1000} $color="#fa1e2a">&gt;&gt;</FreeText>
          <FreeText $x={390} $y={1063}>{`copy this to create
labels for wires`}</FreeText>
          <FreeText $x={564} $y={1073}>System_Label</FreeText>
          <IterBox $x={337} $y={1077} $w={19} $h={20}>i</IterBox>
          <Copyright $x={755} $y={1087}>JKI-SM Copyright ? <CopyLink>2018 JKI - http://jki.net/state-machine</CopyLink> CSM Copyright ?2023 NEVSTOP <CopyLink>https://github.com/NEVSTOP-LAB</CopyLink></Copyright>
          <LoopNotch $x={1613} $y={1108} $w={3} $h={3} />
          <Arrows />
        </Canvas>
        <VScroll>
          <ScrollBtn><ChevUp /></ScrollBtn>
          <VGap $h={169} />
          <VThumb />
          <Spacer />
          <ScrollBtn><ChevDown /></ScrollBtn>
        </VScroll>
      </Middle>

      <Bottom>
        <StatusPath>Communicable State Machine(CSM).lvproj/My Computer</StatusPath>
        <ScrollBtn $w={20}><ChevLeft /></ScrollBtn>
        <HGap $w={241} />
        <HThumb />
        <HRest />
        <ScrollBtn $w={17}><ChevRight /></ScrollBtn>
        <ScrollBtn $w={19}><Grip /></ScrollBtn>
      </Bottom>
    </Page>
  );
}
